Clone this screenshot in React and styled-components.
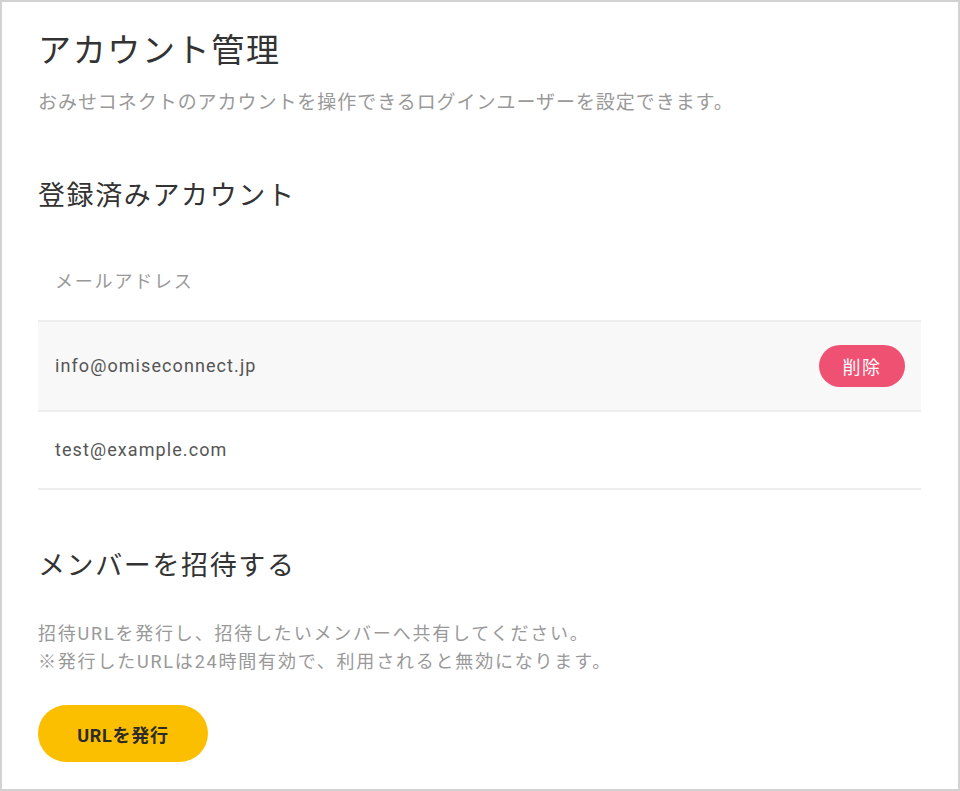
import React from 'react';
import styled, { createGlobalStyle } from 'styled-components';

const GlobalStyle = createGlobalStyle`
  * { box-sizing: border-box; }
  html, body { margin: 0; padding: 0; background: #ffffff; }
  body {
    font-family: Roboto, "Noto Sans CJK JP", sans-serif;
    color: #333333;
    -webkit-font-smoothing: antialiased;
  }
`;

const Page = styled.div`
  width: 960px;
  height: 791px;
  border: 2px solid #d2d2d2;
  padding: 25px 37px 0 36px;
  background: #ffffff;
`;

const Title = styled.h1`
  margin: 0;
  font-size: 33px;
  line-height: 48px;
  font-weight: 400;
  letter-spacing: 0.05em;
  color: #333333;
`;

const Lead = styled.p`
  margin: 14px 0 0;
  font-size: 19px;
  line-height: 28px;
  letter-spacing: 0.05em;
  color: #999999;
`;

const SectionTitle = styled.h2`
  margin: ${(p) => p.$gap}px 0 0;
  font-size: 27px;
  line-height: 40px;
  font-weight: 400;
  letter-spacing: 0.06em;
  color: #333333;
`;

const Table = styled.div`
  margin-top: 28px;
  display: flex;
  flex-direction: column;
`;

const Row = styled.div`
  display: flex;
  align-items: center;
  justify-content: space-between;
  height: ${(p) => (p.$tall ? 90 : 78)}px;
  padding: 0 16px 0 17px;
  border-bottom: 2px solid #ededed;
  background: ${(p) => (p.$active ? '#f8f8f8' : '#ffffff')};
`;

const HeadCell = styled.span`
  font-size: 18px;
  line-height: 30px;
  letter-spacing: 0.1em;
  color: #999999;
`;

const Email = styled.span`
  font-size: 18px;
  line-height: 30px;
  letter-spacing: 0.06em;
  color: #555555;
`;

const DeleteButton = styled.button`
  width: 86px;
  height: 42px;
  border: none;
  border-radius: 21px;
  background: #ef5173;
  color: #ffffff;
  font-family: inherit;
  font-size: 18px;
  letter-spacing: 0.08em;
  cursor: pointer;
`;

const Note = styled.p`
  margin: 34px 0 0;
  font-size: 18px;
  line-height: 28px;
  letter-spacing: 0.1em;
  color: #999999;
`;

const IssueButton = styled.button`
  margin-top: 29px;
  width: 170px;
  height: 57px;
  border: none;
  border-radius: 29px;
  background: #fcbf00;
  color: #2b2b2b;
  font-family: inherit;
  font-size: 18px;
  font-weight: 700;
  letter-spacing: 0.04em;
  cursor: pointer;
`;

const accounts = [
  { email: 'info@omiseconnect.jp', active: true },
  { email: 'test@example.com', active: false },
];

const App = () => {
  return (
    <>
      <GlobalStyle />
      <Page>
        <Title>アカウント管理</Title>
        <Lead>おみせコネクトのアカウントを操作できるログインユーザーを設定できます。</Lead>

        <SectionTitle $gap={59}>登録済みアカウント</SectionTitle>
        <Table>
          <Row>
            <HeadCell>メールアドレス</HeadCell>
          </Row>
          {accounts.map((acc) => (
            <Row key={acc.email} $active={acc.active} $tall={acc.active}>
              <Email>{acc.email}</Email>
              {acc.active && <DeleteButton>削除</DeleteButton>}
            </Row>
          ))}
        </Table>

        <SectionTitle $gap={56}>メンバーを招待する</SectionTitle>
        <Note>
          招待URLを発行し、招待したいメンバーへ共有してください。
          <br />
          ※発行したURLは24時間有効で、利用されると無効になります。
        </Note>
        <IssueButton>URLを発行</IssueButton>
      </Page>
    </>
  );
};

export default App;
